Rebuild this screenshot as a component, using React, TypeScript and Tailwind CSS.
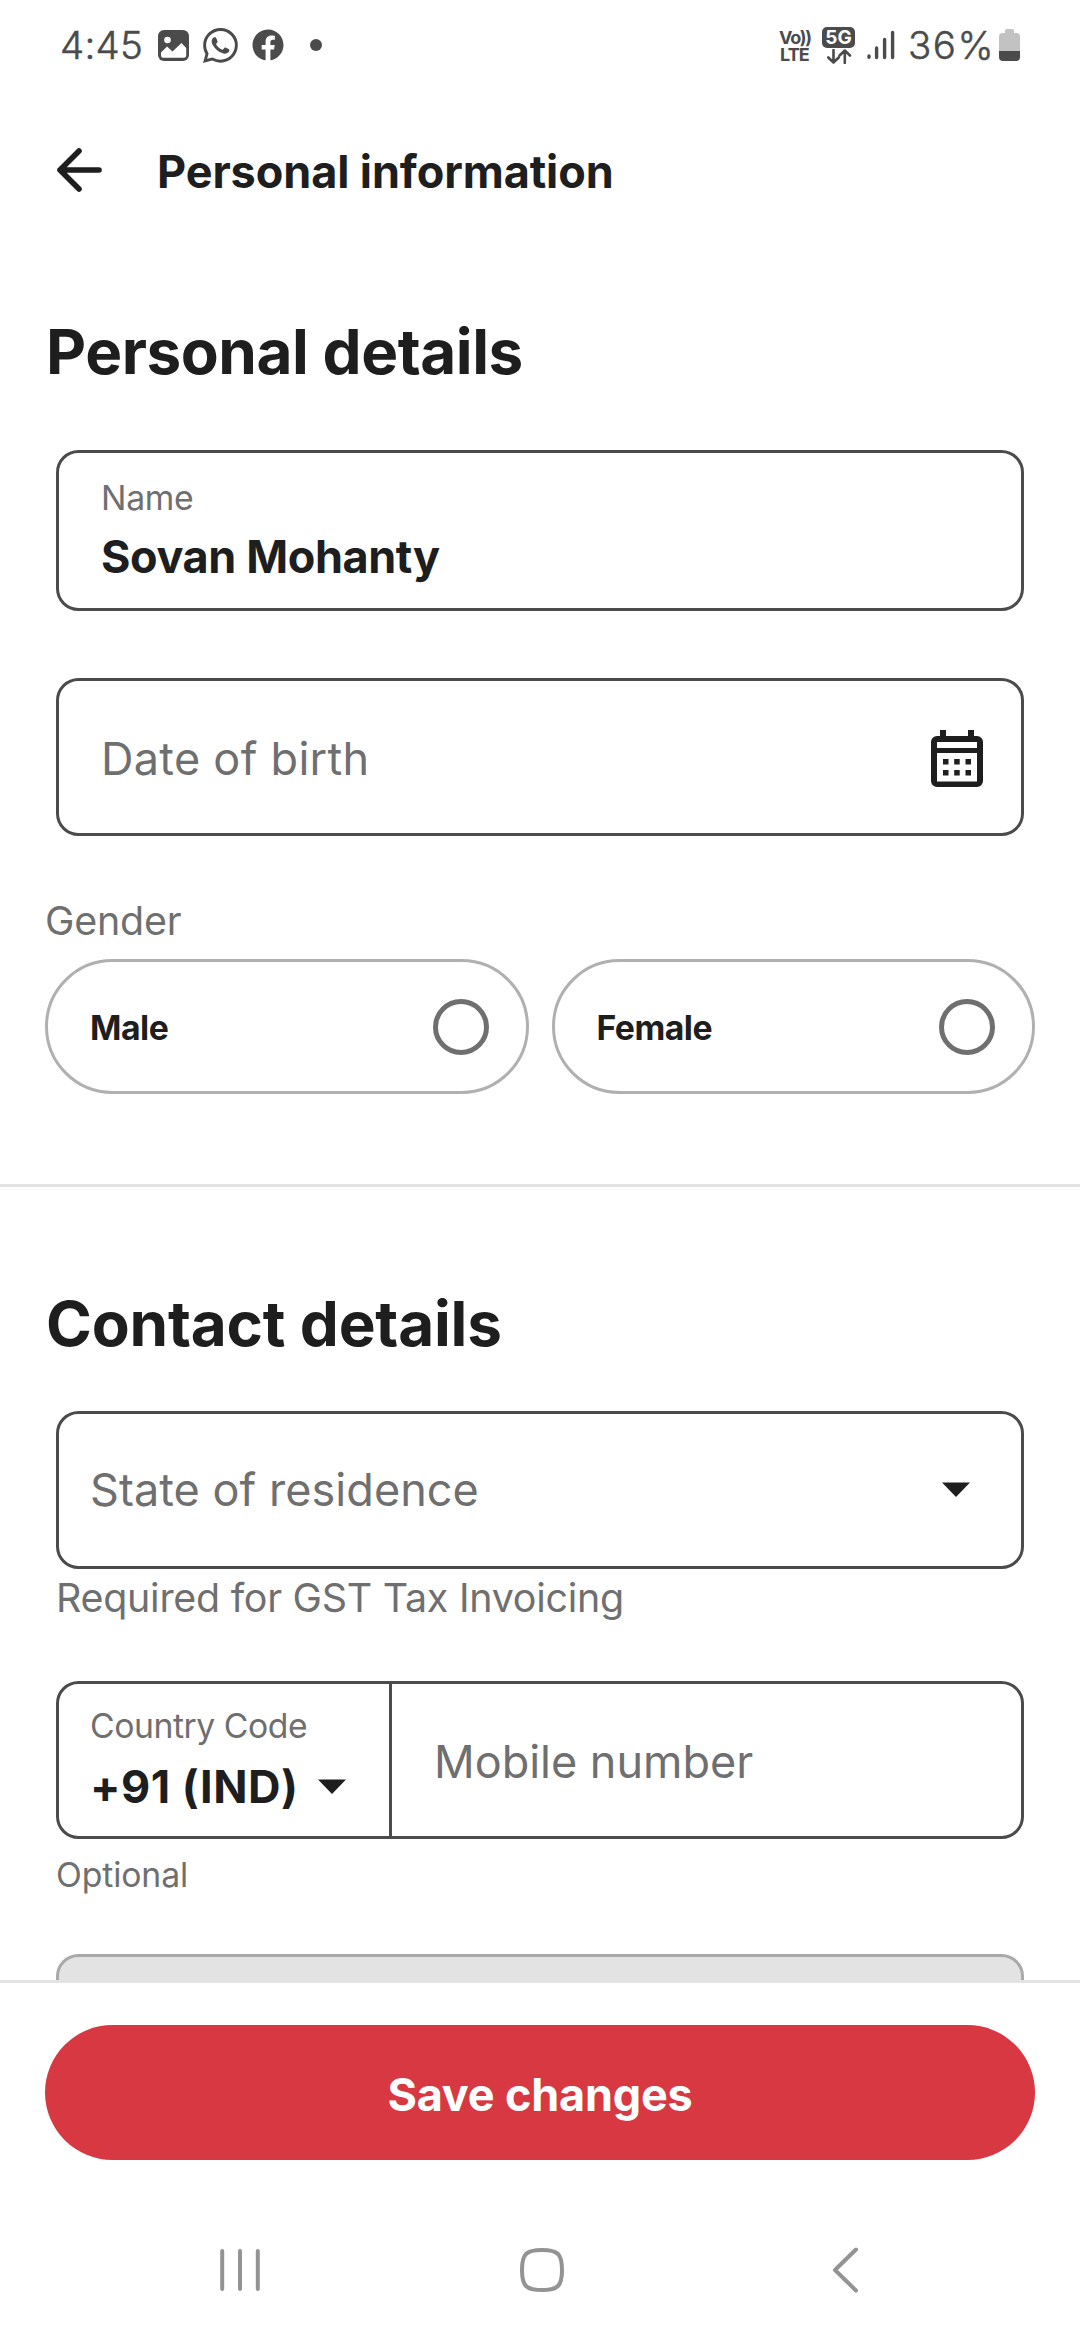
import { BsWhatsapp } from 'react-icons/bs';
import { FaFacebook } from 'react-icons/fa';

const FIELD = 'mx-[11px] flex rounded-[22.5px] border-[3px] border-[#4b4b4b]';
const TITLE = 'pl-px text-[62px] font-bold leading-[75px]';
const STATUS_TEXT = 'whitespace-nowrap text-[38.5px] font-light leading-[48px] [-webkit-text-stroke:0.5px_#4b4b4b]';

function GalleryIcon() {
  return (
    <svg className="block h-[31px] w-[31px]" viewBox="0 0 31 31">
      <rect width="31" height="31" rx="6" fill="#4b4b4b" />
      <circle cx="9.5" cy="10" r="3.3" fill="#fff" />
      <path d="M3 22.5 9 16.5l5.5 5L23.5 13 28.2 18v7.5a2.2 2.2 0 0 1-2.2 2.2H5.2A2.2 2.2 0 0 1 3 25.5Z" fill="#fff" />
    </svg>
  );
}

function SignalIcon() {
  return (
    <svg className="block h-[30px] w-[28px]" viewBox="0 0 28 30" stroke="#4b4b4b" strokeWidth="3.4" strokeLinecap="round">
      <path d="M2 26v1.2M9.6 18v9.5M17.6 9.5v18M25.6 2.5v25" />
    </svg>
  );
}

function DataArrows() {
  return (
    <svg className="mt-px block h-[15px] w-[26px]" viewBox="0 0 26 15" fill="none" stroke="#4b4b4b" strokeWidth="2.6" strokeLinecap="round" strokeLinejoin="round">
      <path d="M7.5 1v12M2.3 8.5l5.2 5 5.2-5M18.8 14V2M13.6 6.5l5.2-5 5.2 5" />
    </svg>
  );
}

function BatteryIcon() {
  return (
    <svg className="block h-[32px] w-[21px]" viewBox="0 0 21 32">
      <path d="M6 2a2 2 0 0 1 2-2h5a2 2 0 0 1 2 2v2h2.5A3.5 3.5 0 0 1 21 7.5V22H0V7.5A3.5 3.5 0 0 1 3.5 4H6Z" fill="#c2c2c2" />
      <path d="M0 22h21v6a4 4 0 0 1-4 4H4a4 4 0 0 1-4-4Z" fill="#4b4b4b" />
    </svg>
  );
}

function CalendarIcon() {
  return (
    <svg className="mt-[3px] block h-[58px] w-[52px]" viewBox="0 0 52 58">
      <path
        fillRule="evenodd"
        fill="#1e1e1e"
        d="M9 0h6v6h22V0h6v6h3a6 6 0 0 1 6 6v39a6 6 0 0 1-6 6H6a6 6 0 0 1-6-6V12a6 6 0 0 1 6-6h3ZM6 12v6h40v-6ZM6 23v28.5h40V23Z"
      />
      <path
        fill="#1e1e1e"
        d="M12 29h5.5v5.5H12ZM23.2 29h5.5v5.5h-5.5ZM34.5 29h5.5v5.5h-5.5ZM12 40h5.5v5.5H12ZM23.2 40h5.5v5.5h-5.5ZM34.5 40h5.5v5.5h-5.5Z"
      />
    </svg>
  );
}

function Caret() {
  return (
    <svg className="-mt-[2px] block h-[15px] w-[28px] shrink-0" viewBox="0 0 28 15">
      <path d="M0 .5h28L14 15Z" fill="#1e1e1e" />
    </svg>
  );
}

function StatusBar() {
  return (
    <div className="flex h-[90px] shrink-0 items-center justify-between px-[60px] text-[#4b4b4b]">
      <div className="flex items-center">
        <span className={`${STATUS_TEXT} w-[98px] tracking-[0.2px]`}>4:45</span>
        <GalleryIcon />
        <BsWhatsapp className="ml-[14px] block h-[35px] w-[35px]" />
        <FaFacebook className="ml-[14px] block h-[32px] w-[32px]" />
        <div className="ml-[26px] h-[12px] w-[12px] rounded-full bg-[#4b4b4b]" />
      </div>
      <div className="flex items-center">
        <div className="flex w-[43px] flex-col pt-px text-[18px] font-bold leading-[17px]">
          <span className="tracking-[-1.2px]">Vo))</span>
          <span className="pl-px tracking-[-0.9px]">LTE</span>
        </div>
        <div className="flex w-[33px] flex-col items-center">
          <div className="h-[21px] w-[33px] rounded-[5px] bg-[#4b4b4b] text-center text-[19px] font-bold leading-[22px] text-white">5G</div>
          <DataArrows />
        </div>
        <div className="ml-[12px]">
          <SignalIcon />
        </div>
        <span className={`${STATUS_TEXT} ml-[13px] w-[91px] tracking-[1.5px]`}>36%</span>
        <BatteryIcon />
      </div>
    </div>
  );
}

function Header() {
  return (
    <header className="flex h-[163px] shrink-0 items-center pl-[57px]">
      <svg className="-mt-[3px] block h-[44px] w-[45px]" viewBox="0 0 45 44" fill="none" stroke="#1e1e1e" strokeWidth="5.6" strokeLinecap="round" strokeLinejoin="round">
        <path d="M42 22H3M22 3 3 22l19 19" />
      </svg>
      <h1 className="ml-[55px] text-[45px] font-bold leading-[54px] tracking-[-0.1px]">Personal information</h1>
    </header>
  );
}

function GenderOption({ label }: { label: string }) {
  return (
    <div className="flex h-[135px] flex-1 items-center justify-between rounded-full border-[3px] border-[#b0b0b0] pl-[42px] pr-[37px]">
      <span className="pt-[2px] text-[33.75px] font-bold leading-[41px] tracking-[-0.5px]">{label}</span>
      <span className="h-[56px] w-[56px] rounded-full border-[5.6px] border-[#6f6f6f]" />
    </div>
  );
}

function NavBar() {
  return (
    <nav className="flex h-[140px] shrink-0 items-center text-[#939393]">
      <svg className="ml-[220px] block h-[44px] w-[40px]" viewBox="0 0 40 44" stroke="currentColor" strokeWidth="4" strokeLinecap="round">
        <path d="M2.2 3v38M20 3v38M37.8 3v38" />
      </svg>
      <svg className="ml-[260px] block h-[44px] w-[44px]" viewBox="0 0 44 44" fill="none" stroke="currentColor" strokeWidth="4">
        <path d="M22 2C38 2 42 6 42 22S38 42 22 42 2 38 2 22 6 2 22 2Z" />
      </svg>
      <svg className="ml-[268px] block h-[46px] w-[27px]" viewBox="0 0 27 46" fill="none" stroke="currentColor" strokeWidth="4" strokeLinecap="round" strokeLinejoin="round">
        <path d="M24 2.5 3 23l21 20.5" />
      </svg>
    </nav>
  );
}

export default function App() {
  return (
    <div className="flex h-[2340px] w-[1080px] flex-col overflow-hidden bg-white font-['Inter',sans-serif] text-[#1e1e1e]">
      <StatusBar />
      <Header />
      <main className="h-[1727px] shrink-0 overflow-hidden">
        <section className="border-b-[3px] border-[#e3e3e3] px-[45px] pb-[90px] pt-[61px]">
          <h2 className={`${TITLE} tracking-[-0.45px]`}>Personal details</h2>
          <div className={`${FIELD} mt-[61px] h-[161px] flex-col pl-[42px] pt-[24px]`}>
            <span className="text-[33.75px] leading-[41px] tracking-[-0.3px] text-[#6f6f6f]">Name</span>
            <span className="mt-[12px] text-[45px] font-bold leading-[54px] tracking-[-0.4px]">Sovan Mohanty</span>
          </div>
          <div className={`${FIELD} mt-[67px] h-[158px] items-center justify-between pl-[42px] pr-[38px]`}>
            <span className="pt-[3px] text-[45px] leading-[54px] tracking-[0.29px] text-[#6f6f6f]">Date of birth</span>
            <CalendarIcon />
          </div>
          <div className="mt-[61px] text-[39.4px] leading-[48px] tracking-[-0.2px] text-[#6f6f6f]">Gender</div>
          <div className="mt-[14px] flex gap-[23px]">
            <GenderOption label="Male" />
            <GenderOption label="Female" />
          </div>
        </section>
        <section className="px-[45px] pt-[99px]">
          <h2 className={`${TITLE} tracking-[-0.2px]`}>Contact details</h2>
          <div className={`${FIELD} mt-[50px] h-[158px] items-center justify-between pl-[31px] pr-[51px]`}>
            <span className="text-[45px] leading-[54px] tracking-[0.05px] text-[#6f6f6f]">State of residence</span>
            <Caret />
          </div>
          <div className="ml-[11px] mt-[5px] text-[39.4px] leading-[48px] tracking-[-0.26px] text-[#6f6f6f]">Required for GST Tax Invoicing</div>
          <div className={`${FIELD} mt-[59px] h-[158px]`}>
            <div className="flex w-[333px] flex-col border-r-[3px] border-[#4b4b4b] pl-[31px] pt-[21px]">
              <span className="text-[33.75px] leading-[41px] tracking-[-0.46px] text-[#6f6f6f]">Country Code</span>
              <div className="mt-[14px] flex items-center">
                <span className="w-[228px] text-[45px] font-bold leading-[54px] tracking-[0.5px]">+91 (IND)</span>
                <Caret />
              </div>
            </div>
            <div className="flex flex-1 items-center pl-[42px] pt-[3px] text-[45px] leading-[54px] text-[#6f6f6f]">Mobile number</div>
          </div>
          <div className="ml-[11px] mt-[15px] text-[33.75px] leading-[41px] tracking-[-0.11px] text-[#6f6f6f]">Optional</div>
          <div className="mx-[11px] mt-[59px] h-[158px] rounded-[22.5px] border-[3px] border-[#a9a9a9] bg-[#e3e3e3]" />
        </section>
      </main>
      <footer className="h-[220px] shrink-0 border-t-[3px] border-[#e3e3e3] px-[45px] pt-[42px]">
        <button className="block h-[135px] w-full rounded-full bg-[#d73841] pt-[4px] text-[45px] font-bold leading-[54px] tracking-[-0.2px] text-white">Save changes</button>
      </footer>
      <NavBar />
    </div>
  );
}
